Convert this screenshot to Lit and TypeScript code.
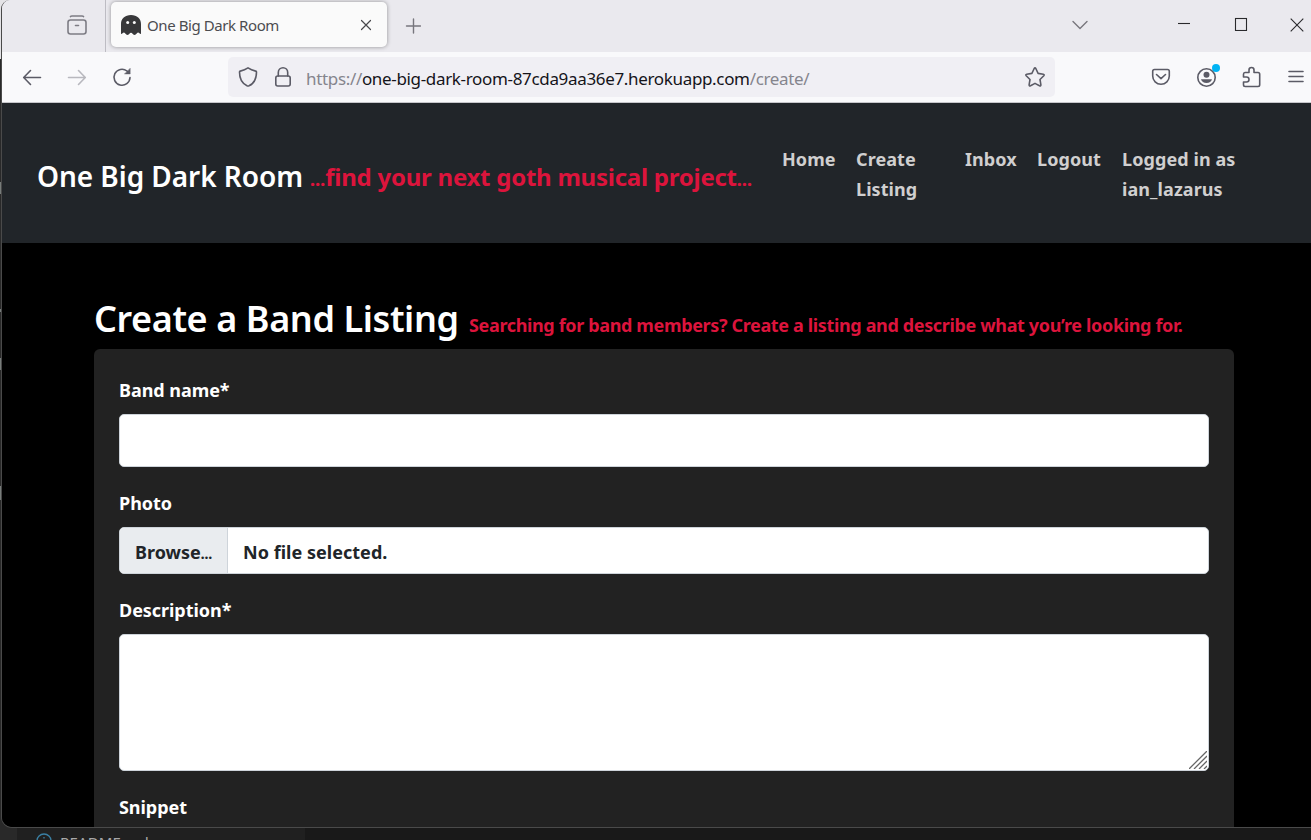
import { LitElement, html, css } from "lit";
import { customElement } from "lit/decorators.js";

@customElement("browser-chrome")
class BrowserChrome extends LitElement {
  static styles = css`
    :host { display: block; }
    * { box-sizing: border-box; }
    svg { display: block; flex: none; fill: none; stroke: #5b5b66; stroke-width: 1.6; stroke-linecap: round; stroke-linejoin: round; }
    .tabs { height: 52px; background: #eae9ee; display: flex; align-items: center; }
    .recent { width: 104px; height: 52px; border-right: 1px solid #bdbcc3; display: flex; align-items: center; padding-left: 64px; }
    .recent svg { stroke: #7d7c84; }
    .tab { margin: -3px 0 0 5px; width: 276px; height: 45px; border-radius: 5px; background: #fafafa; box-shadow: 0 0 4px rgba(0,0,0,.38); display: flex; align-items: center; padding: 0 14px 0 10px; }
    .title { font: 400 15px/20px "Noto Sans", sans-serif; color: #4c4c50; margin: 1px 0 0 6px; flex: 1; white-space: nowrap; letter-spacing: -.42px; }
    .x path { stroke: #47474b; stroke-width: 1.2; }
    .plus { margin: 0 0 0 18px; }
    .plus path, .drop path { stroke: #77767d; stroke-width: 1.4; }
    .drop { margin-left: 651px; margin-top: -3px; }
    .min { margin-left: 89px; margin-top: -4px; }
    .max { margin-left: 43px; margin-top: -4px; }
    .close { margin-left: 42px; margin-top: -3px; }
    .sharp { stroke: #29292c; stroke-width: 1.1; stroke-linecap: butt; stroke-linejoin: miter; }
    .bar { height: 51px; background: #f9f9fb; border-bottom: 1px solid #c6c6ca; display: flex; align-items: center; padding-left: 20px; }
    .fwd { margin-left: 25px; stroke: #b8b8be; }
    .reload { margin-left: 25px; }
    .url { margin-left: 96px; width: 827px; height: 40px; border-radius: 5px; background: #f0eff4; display: flex; align-items: center; padding: 0 10px; }
    .lock { margin-left: 15px; }
    .address { font: 400 17px/22px "Noto Sans", sans-serif; color: #85858d; margin: 3px 0 0 13px; flex: 1; white-space: nowrap; letter-spacing: -.335px; }
    .host { color: #15141a; }
    .pocket { margin-left: 96px; }
    .account { margin-left: 24px; }
    .puzzle { margin-left: 21px; }
    .menu { margin-left: 26px; }
  `;
  render() {
    return html`
      <div class="tabs">
        <div class="recent">
          <svg width="22" height="22" viewBox="0 0 22 22"><path d="M4.500 1.600Q5 1 6 1h10Q17 1 17.500 1.600M9.500 10.500h3"/><rect x="2" y="5" width="18" height="14" rx="2.500"/></svg>
        </div>
        <div class="tab">
          <svg width="20" height="20" viewBox="0 0 20 20"><path d="M0 19V9C0 3.500 4 0 10 0s10 3.500 10 9v10c-1.500 0-1.700-1.500-3-1.500s-1.500 2.500-3.500 2.500-2-2.200-3.500-2.200-1.500 2.200-3.500 2.200S4.300 17.500 3 17.500 1.500 19 0 19z" fill="#38383a" stroke="none"/><circle cx="6.700" cy="7.500" r="1.500" fill="#fafafa" stroke="none"/><circle cx="13.300" cy="7.500" r="1.500" fill="#fafafa" stroke="none"/></svg>
          <span class="title">One Big Dark Room</span>
          <svg class="x" width="14" height="14" viewBox="0 0 14 14"><path d="M2.500 2.500l9 9M11.500 2.500l-9 9"/></svg>
        </div>
        <svg class="plus" width="16" height="16" viewBox="0 0 16 16"><path d="M8.500 1v14M1.500 8h14"/></svg>
        <svg class="drop" width="16" height="16" viewBox="0 0 16 16"><path d="M1 4.500l7 7 7-7"/></svg>
        <svg class="min sharp" width="14" height="14" viewBox="0 0 14 14"><path d="M1 6.500h12"/></svg>
        <svg class="max sharp" width="14" height="14" viewBox="0 0 14 14"><rect x="1.500" y="1.500" width="11" height="12"/></svg>
        <svg class="close sharp" width="14" height="14" viewBox="0 0 14 14"><path d="M.700.700l12.600 12.600M13.300.700L.700 13.300"/></svg>
      </div>
      <div class="bar">
        <svg width="20" height="20" viewBox="0 0 20 20"><path d="M18.500 10.500H2M8.500 3.500L1.700 10.500l6.800 7"/></svg>
        <svg class="fwd" width="20" height="20" viewBox="0 0 20 20"><path d="M1.500 10.500H18M11.500 3.500l6.800 7-6.800 7"/></svg>
        <svg class="reload" width="20" height="20" viewBox="0 0 20 20"><path d="M18 10.500a8 8 0 1 1-3-6.500L16.500 5.500"/><path d="M18.200 1.500v5.500h-5.500z" fill="#5b5b66" stroke-width=".4"/></svg>
        <div class="url">
          <svg width="20" height="20" viewBox="0 0 20 20"><path d="M10 .900c2.500 1.700 5 2.600 7.700 3.200.5.100.8.500.8 1 0 6-2.200 11.300-7.500 13.700q-1 .400-2 0C3.700 16.400 1.500 11.100 1.500 5.100c0-.5.300-.9.800-1C5 3.500 7.500 2.600 10 .900z"/></svg>
          <svg class="lock" width="20" height="20" viewBox="0 0 20 20"><rect x="2.800" y="9" width="14.400" height="10" rx="2"/><path d="M5.300 9V5.500a4.700 4.700 0 0 1 9.400 0V9"/></svg>
          <span class="address">https://<span class="host">one-big-dark-room-87cda9aa36e7.herokuapp.com</span>/create/</span>
          <svg width="20" height="20" viewBox="0 0 20 20"><path d="M9.200 1.500q.8-1.300 1.600 0l2.300 4.900 5.200.8q1.400.4.500 1.500L15 12.500l.9 5.300q0 1.500-1.400 1L10 16.400l-4.500 2.400q-1.400.5-1.400-1l.9-5.300L1.200 8.700q-.9-1.100.5-1.500l5.200-.8z"/></svg>
        </div>
        <svg class="pocket" width="20" height="20" viewBox="0 0 20 20"><path d="M3.500 2.500h13q1.800 0 1.800 1.800V9a8.300 8.300 0 0 1-16.600 0V4.300q0-1.800 1.800-1.800zM5.500 7.500L10 11.700l4.500-4.200"/></svg>
        <svg class="account" width="26" height="28" viewBox="0 0 26 28"><circle cx="11.500" cy="14.500" r="8.700"/><circle cx="11.500" cy="11.800" r="3" fill="#5b5b66" stroke="none"/><path d="M6 16.300h11c-.5 2.200-2.800 3.700-5.500 3.700S6.500 18.500 6 16.300z" fill="#5b5b66" stroke="none"/><circle cx="21" cy="5" r="4" fill="#00b3f4" stroke="none"/></svg>
        <svg class="puzzle" width="20" height="22" viewBox="0 0 20 22"><path d="M3 6.500h4V4a2.500 2.500 0 0 1 5 0v2.500h4q1.700 0 1.700 1.700v10.600q0 1.700-1.700 1.700H3.200q-1.700 0-1.700-1.700V16h3a2.500 2.500 0 0 0 0-5h-3V8.200Q1.500 6.500 3 6.500z"/></svg>
        <svg class="menu" width="16" height="16" viewBox="0 0 16 16"><path d="M1 2.500h14M1 7.500h14M1 12.500h14"/></svg>
      </div>`;
  }
}

@customElement("listing-page")
class ListingPage extends LitElement {
  static styles = css`
    :host { display: block; height: 724px; background: #000; overflow: hidden; font-family: "Noto Sans", sans-serif; font-weight: 700; color: #fff; }
    * { box-sizing: border-box; }
    header { height: 140px; background: #212529; display: flex; padding: 0 0 0 35px; white-space: nowrap; }
    .brand { font-size: 28px; line-height: 36px; padding-top: 55px; width: 273px; letter-spacing: -.05px; font-weight: 600; }
    .tagline { font-size: 24px; line-height: 36px; padding-top: 56px; color: #dc143c; width: 472px; letter-spacing: -.25px; }
    .dots { font-size: .74em; letter-spacing: 0; font-weight: 800; }
    nav { display: flex; padding-top: 41px; font-size: 18px; line-height: 30px; color: #d0cfcf; letter-spacing: .08px; }
    .home { width: 74px; }
    .create { width: 109px; }
    .inbox { width: 72px; }
    .logout { width: 85px; }
    main { padding: 50px 77px 0 92px; }
    .heading { display: flex; align-items: baseline; white-space: nowrap; height: 56px; }
    h1 { margin: 0; font-size: 36px; font-weight: 600; line-height: 52px; width: 375px; letter-spacing: -.4px; }
    .sub { color: #dc143c; font-size: 18px; letter-spacing: -.355px; }
    .card { height: 600px; background: #222; border-radius: 6px; padding: 26px 25px 0; font-size: 18px; }
    .label { line-height: 30px; height: 39px; letter-spacing: -.05px; }
    .field { background: #fff; border: 1px solid #ced4da; border-radius: 5px; overflow: hidden; }
    .name { height: 53px; margin-bottom: 21px; }
    .file { height: 47px; margin-bottom: 21px; display: flex; color: #212529; line-height: 48px; }
    .browse { width: 108px; border-right: 1px solid #ced4da; background: #e9ecef; padding-left: 15px; white-space: nowrap; }
    .chosen { padding-left: 15px; letter-spacing: .03px; }
    .area { height: 137px; margin-bottom: 21px; display: flex; align-items: flex-end; justify-content: flex-end; padding: 0 1px 1px 0; }
    .grip { stroke: #666; stroke-width: 1.3; }
  `;
  render() {
    return html`
      <header>
        <div class="brand">One Big Dark Room</div>
        <div class="tagline"><span class="dots">…</span>find your next goth musical project<span class="dots">…</span></div>
        <nav>
          <div class="home">Home</div>
          <div class="create">Create<br />Listing</div>
          <div class="inbox">Inbox</div>
          <div class="logout">Logout</div>
          <div class="user">Logged in as<br />ian_lazarus</div>
        </nav>
      </header>
      <main>
        <div class="heading">
          <h1>Create a Band Listing</h1>
          <span class="sub">Searching for band members? Create a listing and describe what you’re looking for.</span>
        </div>
        <div class="card">
          <div class="label">Band name*</div>
          <div class="field name"></div>
          <div class="label">Photo</div>
          <div class="field file"><div class="browse">Browse<span class="dots">…</span></div><div class="chosen">No file selected.</div></div>
          <div class="label">Description*</div>
          <div class="field area"><svg class="grip" width="18" height="18" viewBox="0 0 18 18"><path d="M0 18L18 0M5 18L18 5M10 18l8-8M15 18l3-3"/></svg></div>
          <div class="label">Snippet</div>
        </div>
      </main>`;
  }
}

@customElement("app-root")
class AppRoot extends LitElement {
  static styles = css`
    :host { display: block; position: relative; width: 1311px; height: 840px; overflow: hidden; background: linear-gradient(#e4e3e6 0 59px, #292929 59px); }
    * { box-sizing: border-box; }
    .window { position: relative; margin-left: 1px; width: 1310px; height: 828px; border-left: 1px solid #4a4a4a; border-bottom: 1px solid #4a4a4a; border-radius: 9px 0 0 11px; overflow: hidden; background: linear-gradient(#eae9ee 0 50px, #000 50px); }
    .behind { display: flex; height: 12px; overflow: hidden; background: #191919; }
    .rail { width: 17px; background: #292929; }
    .tree { width: 288px; background: #202020; display: flex; padding: 4px 0 0 19px; color: #a8a8a8; font: 400 15px/20px "Noto Sans", sans-serif; letter-spacing: .15px; }
    .info { fill: none; stroke: #3a80a4; stroke-width: 1.3; flex: none; margin: 1px 8px 0 0; }
    .speck { position: absolute; left: 0; width: 1px; background: #777c7a; }
    .s1 { top: 182px; height: 12px; }
    .s2 { top: 309px; height: 3px; }
    .s3 { top: 358px; height: 12px; }
    .s4 { top: 486px; height: 14px; }
  `;
  render() {
    return html`
      <div class="window"><browser-chrome></browser-chrome><listing-page></listing-page></div>
      <div class="behind">
        <div class="rail"></div>
        <div class="tree"><svg class="info" width="16" height="16" viewBox="0 0 16 16"><circle cx="8" cy="8" r="7"/><path d="M8 4v1.500M8 7v5"/></svg>README.md</div>
      </div>
      <i class="speck s1"></i><i class="speck s2"></i><i class="speck s3"></i><i class="speck s4"></i>`;
  }
}
